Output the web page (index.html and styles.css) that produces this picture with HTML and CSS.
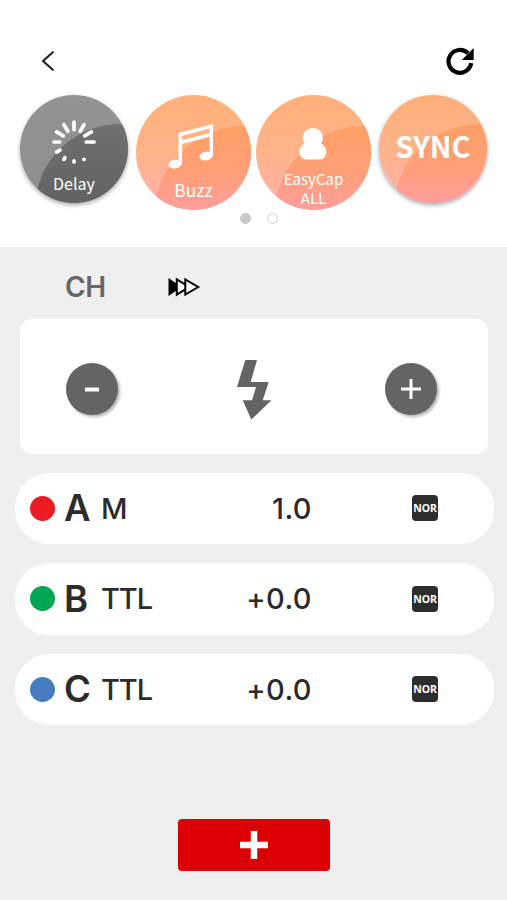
FILE: index.html
```html
<!DOCTYPE html>
<html lang="en">
<head>
    <meta charset="UTF-8">
    <title>Flash control</title>
    <link rel="stylesheet" href="styles.css">
</head>
<body>
    <header class="top">
        <div class="nav">
            <svg class="back" viewBox="0 0 14 22" width="14" height="22">
                <path d="M11.8 2.2 2 11l9.8 8.8" />
            </svg>
            <svg class="refresh" viewBox="0 0 30 30" width="30" height="30">
                <path class="ring" d="M26.2 17.2A11.4 11.4 0 1 1 23 7.3" />
                <path d="M28.7 2v12H16.8z" />
            </svg>
        </div>

        <div class="dials">
            <div class="dial gray">
                <svg class="spinner" viewBox="-22 -22 44 44" width="44" height="44">
                    <path d="M12.3 0H20M10.7-6.2l6.7-3.9M6.2-10.7l3.9-6.7M0-12.3V-20M-6.2-10.7l-3.9-6.7M-10.7-6.2l-6.7-3.9M-14.3 0H-20M-14 8.1l-3.3 2M-9.1 15.7l-1 1.7M0 18.8V20M10 17.3v.1" />
                </svg>
                <span class="label">Delay</span>
            </div>
            <div class="dial large">
                <svg class="notes" viewBox="0 0 46 46" width="46" height="46">
                    <path d="M12.3 40.5V11.5l31-8.2V32.5M12.3 19.4l31-7.8" />
                    <ellipse cx="7.2" cy="41" rx="6.7" ry="4.4" transform="rotate(-12 7.2 41)" />
                    <ellipse cx="38.2" cy="33" rx="6.7" ry="4.4" transform="rotate(-12 38.2 33)" />
                </svg>
                <span class="label">Buzz</span>
            </div>
            <div class="dial large">
                <svg class="person" viewBox="0 0 28 33" width="28" height="33">
                    <circle cx="13.8" cy="11" r="10.1" />
                    <path d="M6.5 16.5h14.6c3.6 1 6.2 4 6.2 8 0 4.8-2.5 8-6.5 8H7c-4 0-6.5-3.2-6.5-8 0-4 2.6-7 6-8z" />
                </svg>
                <span class="label small">EasyCap<br>ALL</span>
            </div>
            <div class="dial">
                <span class="sync">SYNC</span>
            </div>
        </div>

        <div class="pager">
            <span class="dot active"></span>
            <span class="dot"></span>
        </div>
    </header>

    <main>
        <div class="channel">
            <span>CH</span>
            <svg viewBox="0 0 34 20" width="34" height="20">
                <path class="solid" d="M1.5 1v18l13-9z" />
                <path d="M9.8 2.4v15.2L22 10z" />
                <path d="M18.3 2.4v15.2L31.2 10z" />
            </svg>
        </div>

        <div class="power">
            <div class="round">
                <svg viewBox="0 0 20 20" width="20" height="20"><path class="minus" d="M3 10.5h14" /></svg>
            </div>
            <svg class="bolt" viewBox="0 0 35 60" width="35" height="60">
                <path d="M8.3 0H20L13.7 22H31.7L25.7 40.3H34.5L14.3 59.5 5.7 40.3H15L19 27H0z" />
            </svg>
            <div class="round">
                <svg viewBox="0 0 20 20" width="20" height="20"><path d="M0 10h20M10 0v20" /></svg>
            </div>
        </div>

        <div class="groups">
            <div class="group">
                <span class="color red"></span>
                <span class="name">A</span>
                <span class="mode">M</span>
                <span class="value">1.0</span>
                <span class="badge">NOR</span>
            </div>
            <div class="group">
                <span class="color green"></span>
                <span class="name">B</span>
                <span class="mode">TTL</span>
                <span class="value">+0.0</span>
                <span class="badge">NOR</span>
            </div>
            <div class="group">
                <span class="color blue"></span>
                <span class="name">C</span>
                <span class="mode">TTL</span>
                <span class="value">+0.0</span>
                <span class="badge">NOR</span>
            </div>
        </div>

        <div class="add">
            <svg viewBox="0 0 28 28" width="28" height="28"><path d="M0 14h28M14 0v28" /></svg>
        </div>
    </main>
</body>
</html>
```
FILE: styles.css
```css
* {
    box-sizing: border-box;
}
body {
    margin: 0;
    height: 900px;
    background: #efefef;
    color: #2b2b2b;
    font-family: Inter, "Liberation Sans", sans-serif;
    overflow: hidden;
}
svg {
    display: block;
    flex-shrink: 0;
}

/* header */
.top {
    height: 247px;
    padding-top: 46px;
    background: #fff;
}
.nav {
    display: flex;
    align-items: center;
    justify-content: space-between;
    height: 30px;
    padding: 0 32px 0 41px;
}
.back path {
    fill: none;
    stroke: #222;
    stroke-width: 2.2;
    stroke-linecap: round;
    stroke-linejoin: round;
}
.refresh .ring {
    fill: none;
    stroke: #000;
    stroke-width: 4.2;
}
.dials {
    display: flex;
    height: 116px;
    margin-top: 19px;
    padding-left: 20px;
}
.dial {
    position: relative;
    display: flex;
    flex-direction: column;
    align-items: center;
    width: 108px;
    height: 108px;
    border-radius: 50%;
    overflow: hidden;
    background: linear-gradient(#ffb079, #ffb389 50%, #ffb0ae);
    box-shadow: 0 2px 4px rgba(0, 0, 0, 0.35);
    color: #fff;
    font-family: "Noto Sans CJK SC", sans-serif;
}
.dial::before {
    content: "";
    position: absolute;
    left: 15px;
    top: 29px;
    width: 170px;
    height: 170px;
    border-radius: 50%;
    background: linear-gradient(#ff9f64, #ff9f78 25%, #ff9da0 48%);
}
.dial > * {
    position: relative;
}
.dial.gray {
    background: linear-gradient(#939393, #8e8e8e);
}
.dial.gray::before {
    background: linear-gradient(#707070, #636363 45%);
}
.dial.large {
    width: 115px;
    height: 115px;
    margin-left: 5px;
    box-shadow: none;
}
.dial.large::before {
    left: 18px;
    top: 31px;
    width: 182px;
    height: 182px;
}
.dial.gray + .large {
    margin-left: 8px;
}
.dial:last-child {
    margin-left: 8px;
}
.spinner {
    margin-top: 25px;
}
.spinner path {
    fill: none;
    stroke: #fff;
    stroke-width: 3.7;
    stroke-linecap: round;
}
.notes {
    margin: 28px 0 0 -6px;
    fill: #fff;
}
.notes path {
    fill: none;
    stroke: #fff;
    stroke-width: 3.6;
}
.person {
    margin: 32px 0 0 -1px;
    fill: #fff;
}
.label {
    margin-top: 7px;
    font-size: 16px;
    line-height: 24px;
}
.large .label {
    margin-top: 9px;
    font-size: 17.3px;
}
.large .label.small {
    margin-top: 10px;
    font-size: 15px;
    line-height: 18.5px;
    text-align: center;
}
.sync {
    margin-top: 29px;
    font-size: 29px;
    font-weight: 700;
    line-height: 42px;
}
.pager {
    display: flex;
    justify-content: center;
    gap: 16px;
    padding: 2px 0 0 11px;
}
.dot {
    width: 11px;
    height: 11px;
    border: 1.5px solid #cfcfcf;
    border-radius: 50%;
}
.dot.active {
    background: #c8c8c8;
    border-color: #c8c8c8;
}

/* channel */
.channel {
    display: flex;
    align-items: center;
    gap: 61px;
    height: 72px;
    padding: 8px 0 0 65px;
    color: #666;
    font-size: 28px;
    font-weight: 600;
}
.channel span {
    width: 41px;
    letter-spacing: -0.5px;
}
.channel path {
    fill: #fff;
    stroke: #000;
    stroke-width: 2;
}
.channel .solid {
    fill: #000;
    stroke: none;
}

/* power */
.power {
    display: flex;
    align-items: center;
    justify-content: space-between;
    height: 135px;
    margin: 0 19px 0 20px;
    padding: 4px 51px 0 46px;
    background: #fff;
    border-radius: 12px;
}
.round {
    display: flex;
    align-items: center;
    justify-content: center;
    width: 52px;
    height: 52px;
    border-radius: 50%;
    background: #646464;
    box-shadow: 2px 2px 3px rgba(0, 0, 0, 0.3);
}
.round path {
    stroke: #fff;
    stroke-width: 3;
}
.round .minus {
    stroke-width: 4;
}
.bolt {
    margin: 2px 0 0 6px;
    fill: #646464;
}

/* groups */
.groups {
    display: flex;
    flex-direction: column;
    gap: 19px;
    margin: 18.5px 13px 0 15px;
}
.group {
    display: flex;
    align-items: center;
    height: 71.5px;
    padding-left: 15px;
    background: #fff;
    border-radius: 34px;
    font-size: 29px;
    font-weight: 550;
}
.color {
    width: 25px;
    height: 25px;
    border-radius: 50%;
}
.red {
    background: #ed1c24;
}
.green {
    background: #00a651;
}
.blue {
    background: #477dc0;
}
.name {
    width: 37px;
    margin-left: 9px;
    font-size: 36.5px;
    font-weight: 600;
}
.mode {
    width: 80px;
    letter-spacing: -1.1px;
}
.value {
    width: 131px;
    letter-spacing: 0.4px;
    text-align: right;
}
.badge {
    width: 26px;
    height: 26px;
    margin-left: 100px;
    border-radius: 4px;
    background: #2d2d2d;
    color: #fff;
    font-family: "Noto Sans", sans-serif;
    font-size: 10.5px;
    font-weight: 700;
    line-height: 26px;
    text-align: center;
}

.add {
    display: flex;
    align-items: center;
    justify-content: center;
    width: 152px;
    height: 52px;
    margin: 94px auto 0;
    border-radius: 4px;
    background: #da0004;
}
.add path {
    stroke: #fff;
    stroke-width: 6.5;
}
```
